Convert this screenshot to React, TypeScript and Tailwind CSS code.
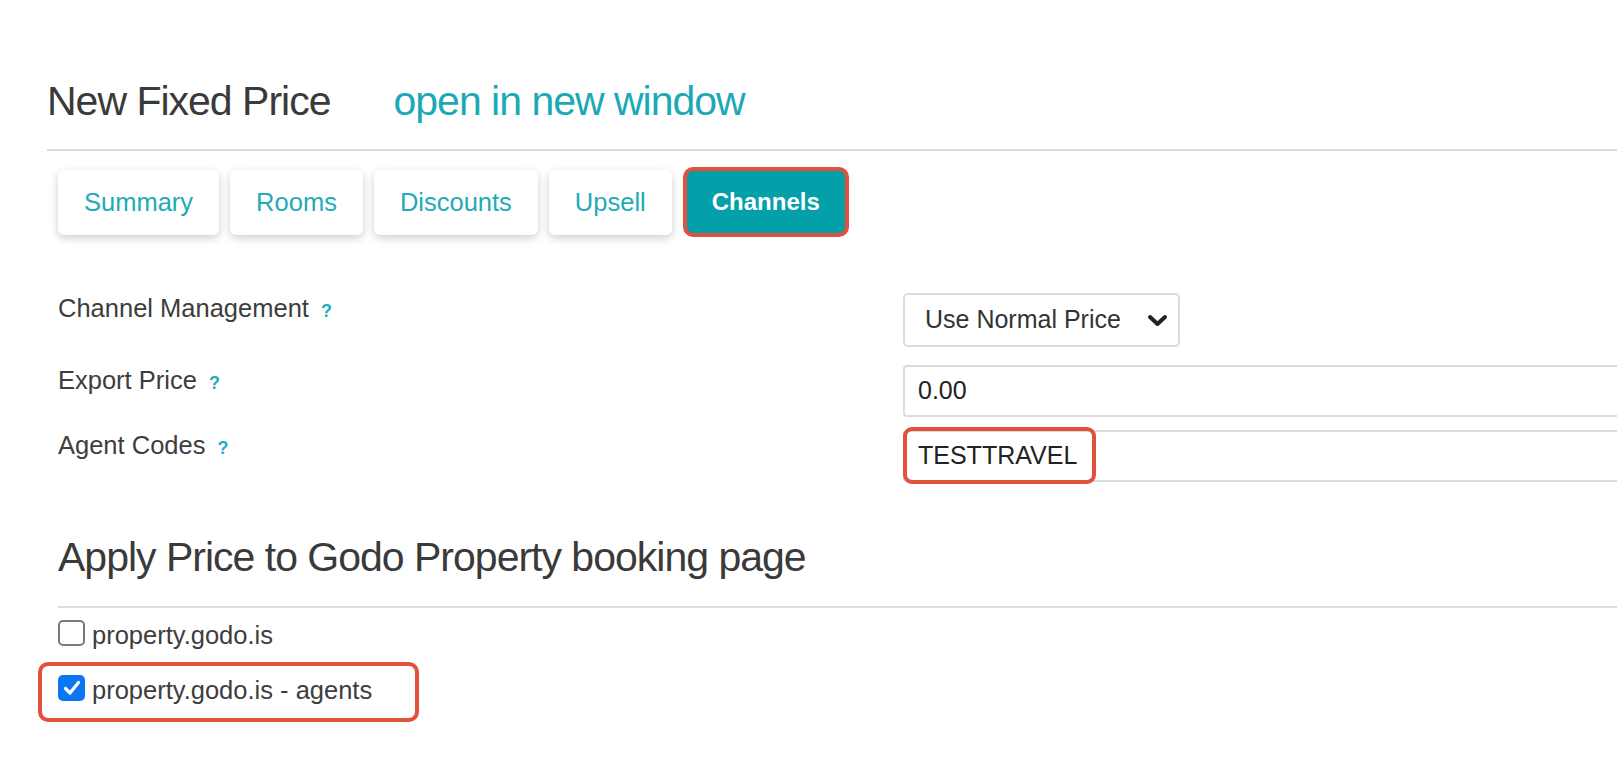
const tabs = ['Summary', 'Rooms', 'Discounts', 'Upsell']

function Help() {
  return (
    <span className="ml-[12px] text-[18px] font-bold text-[#1eaebd]">?</span>
  )
}

function Check({ checked }: { checked?: boolean }) {
  if (checked) {
    return (
      <span className="flex h-[26px] w-[27px] shrink-0 items-center justify-center rounded-[5px] bg-[#0b76f2]">
        <svg width="18" height="16" viewBox="0 0 18 16">
          <path
            d="M2.5 8.5 L7 13 L15.5 2.5"
            fill="none"
            stroke="#fff"
            strokeWidth="3.2"
            strokeLinecap="round"
            strokeLinejoin="round"
          />
        </svg>
      </span>
    )
  }
  return (
    <span className="h-[26px] w-[27px] shrink-0 rounded-[5px] border-2 border-[#7a7a7a] bg-white" />
  )
}

export default function App() {
  return (
    <div className="h-[772px] w-full overflow-hidden bg-white pl-[47px] font-['Liberation_Sans',Arial,sans-serif] text-[#333]">
      <div className="mt-[77px] flex items-baseline text-[41px] leading-[49px] tracking-[-1px]">
        <span className="text-[#3a3a3a]">New Fixed Price</span>
        <span className="ml-[63px] text-[#1ca9b6]">open in new window</span>
      </div>
      <div className="mt-[23px] h-[2px] bg-[#dcdcdc]" />

      <div className="pl-[11px]">
        <div className="mt-[16px] flex h-[70px] items-center gap-[11px]">
          {tabs.map((t) => (
            <div
              key={t}
              className="flex h-[65px] items-center rounded-[6px] bg-white px-[26px] text-[25.5px] text-[#22aab8] shadow-[0_3px_8px_rgba(0,0,0,0.2)]"
            >
              {t}
            </div>
          ))}
          <div className="flex h-[70px] items-center rounded-[10px] border-4 border-[#e2513c] bg-[#04a0aa] px-[25px] text-[24px] font-bold text-white">
            Channels
          </div>
        </div>

        <div className="mt-[56px] flex items-start">
          <div className="w-[845px] shrink-0 text-[25.5px] leading-[30px] text-[#3d3d3d]">
            Channel Management
            <Help />
          </div>
          <div className="flex h-[54px] w-[277px] shrink-0 items-center justify-between rounded-[5px] border-2 border-[#d8dcdf] pl-[20px] pr-[10px] text-[25px] text-[#333]">
            <span>Use Normal Price</span>
            <svg width="21" height="13" viewBox="0 0 21 13">
              <path
                d="M3 3 L10.5 10 L18 3"
                fill="none"
                stroke="#222"
                strokeWidth="4"
                strokeLinecap="round"
                strokeLinejoin="round"
              />
            </svg>
          </div>
        </div>

        <div className="mt-[18px] flex items-start">
          <div className="w-[845px] shrink-0 text-[25.5px] leading-[30px] text-[#3d3d3d]">
            Export Price
            <Help />
          </div>
          <div className="flex h-[52px] w-[760px] shrink-0 items-center rounded-l-[4px] border-2 border-[#d8dcdf] pl-[13px] text-[25px] text-[#222]">
            0.00
          </div>
        </div>

        <div className="mt-[13px] flex items-start">
          <div className="w-[845px] shrink-0 text-[25.5px] leading-[30px] text-[#3d3d3d]">
            Agent Codes
            <Help />
          </div>
          <div className="relative flex h-[52px] w-[760px] shrink-0 items-center rounded-l-[4px] border-2 border-[#d8dcdf] pl-[13px] text-[25px] text-[#222]">
            TESTTRAVEL
            <div className="absolute left-[-2px] top-[-5px] h-[57px] w-[193px] rounded-[9px] border-4 border-[#e2513c]" />
          </div>
        </div>

        <div className="mt-[51px] text-[41px] leading-[49px] tracking-[-1px] text-[#3a3a3a]">
          Apply Price to Godo Property booking page
        </div>
        <div className="mt-[24px] h-[2px] bg-[#dcdcdc]" />

        <div className="mt-[12px] flex items-start gap-[7px]">
          <Check />
          <span className="text-[25.5px] leading-[30px] text-[#3d3d3d]">property.godo.is</span>
        </div>

        <div className="relative mt-[25px] flex items-start gap-[7px]">
          <Check checked />
          <span className="text-[25.5px] leading-[30px] text-[#3d3d3d]">property.godo.is - agents</span>
          <div className="absolute left-[-20px] top-[-13px] h-[60px] w-[381px] rounded-[10px] border-4 border-[#e2513c]" />
        </div>
      </div>
    </div>
  )
}
